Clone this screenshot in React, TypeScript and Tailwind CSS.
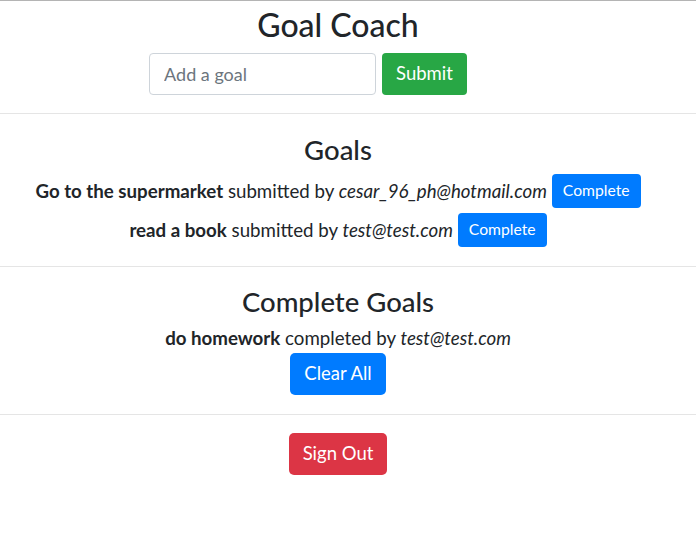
const goals = [
  { id: 1, title: 'Go to the supermarket', email: 'cesar_96_ph@hotmail.com' },
  { id: 2, title: 'read a book', email: 'test@test.com' },
];

const completeGoals = [{ id: 1, title: 'do homework', email: 'test@test.com' }];

export default function App() {
  return (
    <div className="min-h-[542px] w-[696px] border-t border-[#b4b4b4] bg-white font-['Lato',sans-serif] text-[#212529]">
      {/* header */}
      <div className="pr-[20px] pt-[3px]">
        <h1 className="text-center text-[32px] font-medium leading-[42px]">Goal Coach</h1>
        <div className="mt-[7px] flex justify-center gap-[6px] pr-[60px]">
          <input
            type="text"
            placeholder="Add a goal"
            className="h-[42px] w-[227px] rounded-[4px] border border-[#ced4da] px-[14px] text-[18px] placeholder:text-[#6c757d] focus:outline-none"
          />
          <button className="h-[42px] rounded-[4px] bg-[#28a745] px-[14px] text-[18.5px] text-white">
            Submit
          </button>
        </div>
      </div>

      <hr className="mt-[18px] border-t border-[#e5e5e5]" />

      {/* goals */}
      <div className="pr-[20px] pt-[21px]">
        <h3 className="text-center text-[27.5px] font-medium leading-[29px]">Goals</h3>
        <div className="mt-[10px] flex flex-col gap-[5px]">
          {goals.map((goal) => (
            <div key={goal.id} className="flex items-center justify-center gap-[5px] text-[18.7px]">
              <span>
                <b className="font-bold">{goal.title}</b> submitted by <i>{goal.email}</i>
              </span>
              <button className="h-[34px] rounded-[4px] bg-[#007bff] px-[11px] text-[15.7px] text-white">
                Complete
              </button>
            </div>
          ))}
        </div>
      </div>

      <hr className="mt-[19px] border-t border-[#e5e5e5]" />

      {/* complete goals */}
      <div className="pr-[20px] pt-[20px]">
        <h3 className="text-center text-[27.5px] font-medium leading-[29px]">Complete Goals</h3>
        <div className="mt-[12px] flex flex-col items-center">
          {completeGoals.map((goal) => (
            <div key={goal.id} className="text-[18.7px] leading-[21px]">
              <b className="font-bold">{goal.title}</b> completed by <i>{goal.email}</i>
            </div>
          ))}
          <button className="mt-[4px] h-[42px] rounded-[5px] bg-[#007bff] px-[14px] text-[18.5px] text-white">
            Clear All
          </button>
        </div>
      </div>

      <hr className="mt-[19px] border-t border-[#e5e5e5]" />

      <div className="flex justify-center pr-[20px] pt-[18px]">
        <button className="h-[42px] rounded-[5px] bg-[#dc3545] px-[14px] text-[18.5px] text-white">
          Sign Out
        </button>
      </div>
    </div>
  );
}
